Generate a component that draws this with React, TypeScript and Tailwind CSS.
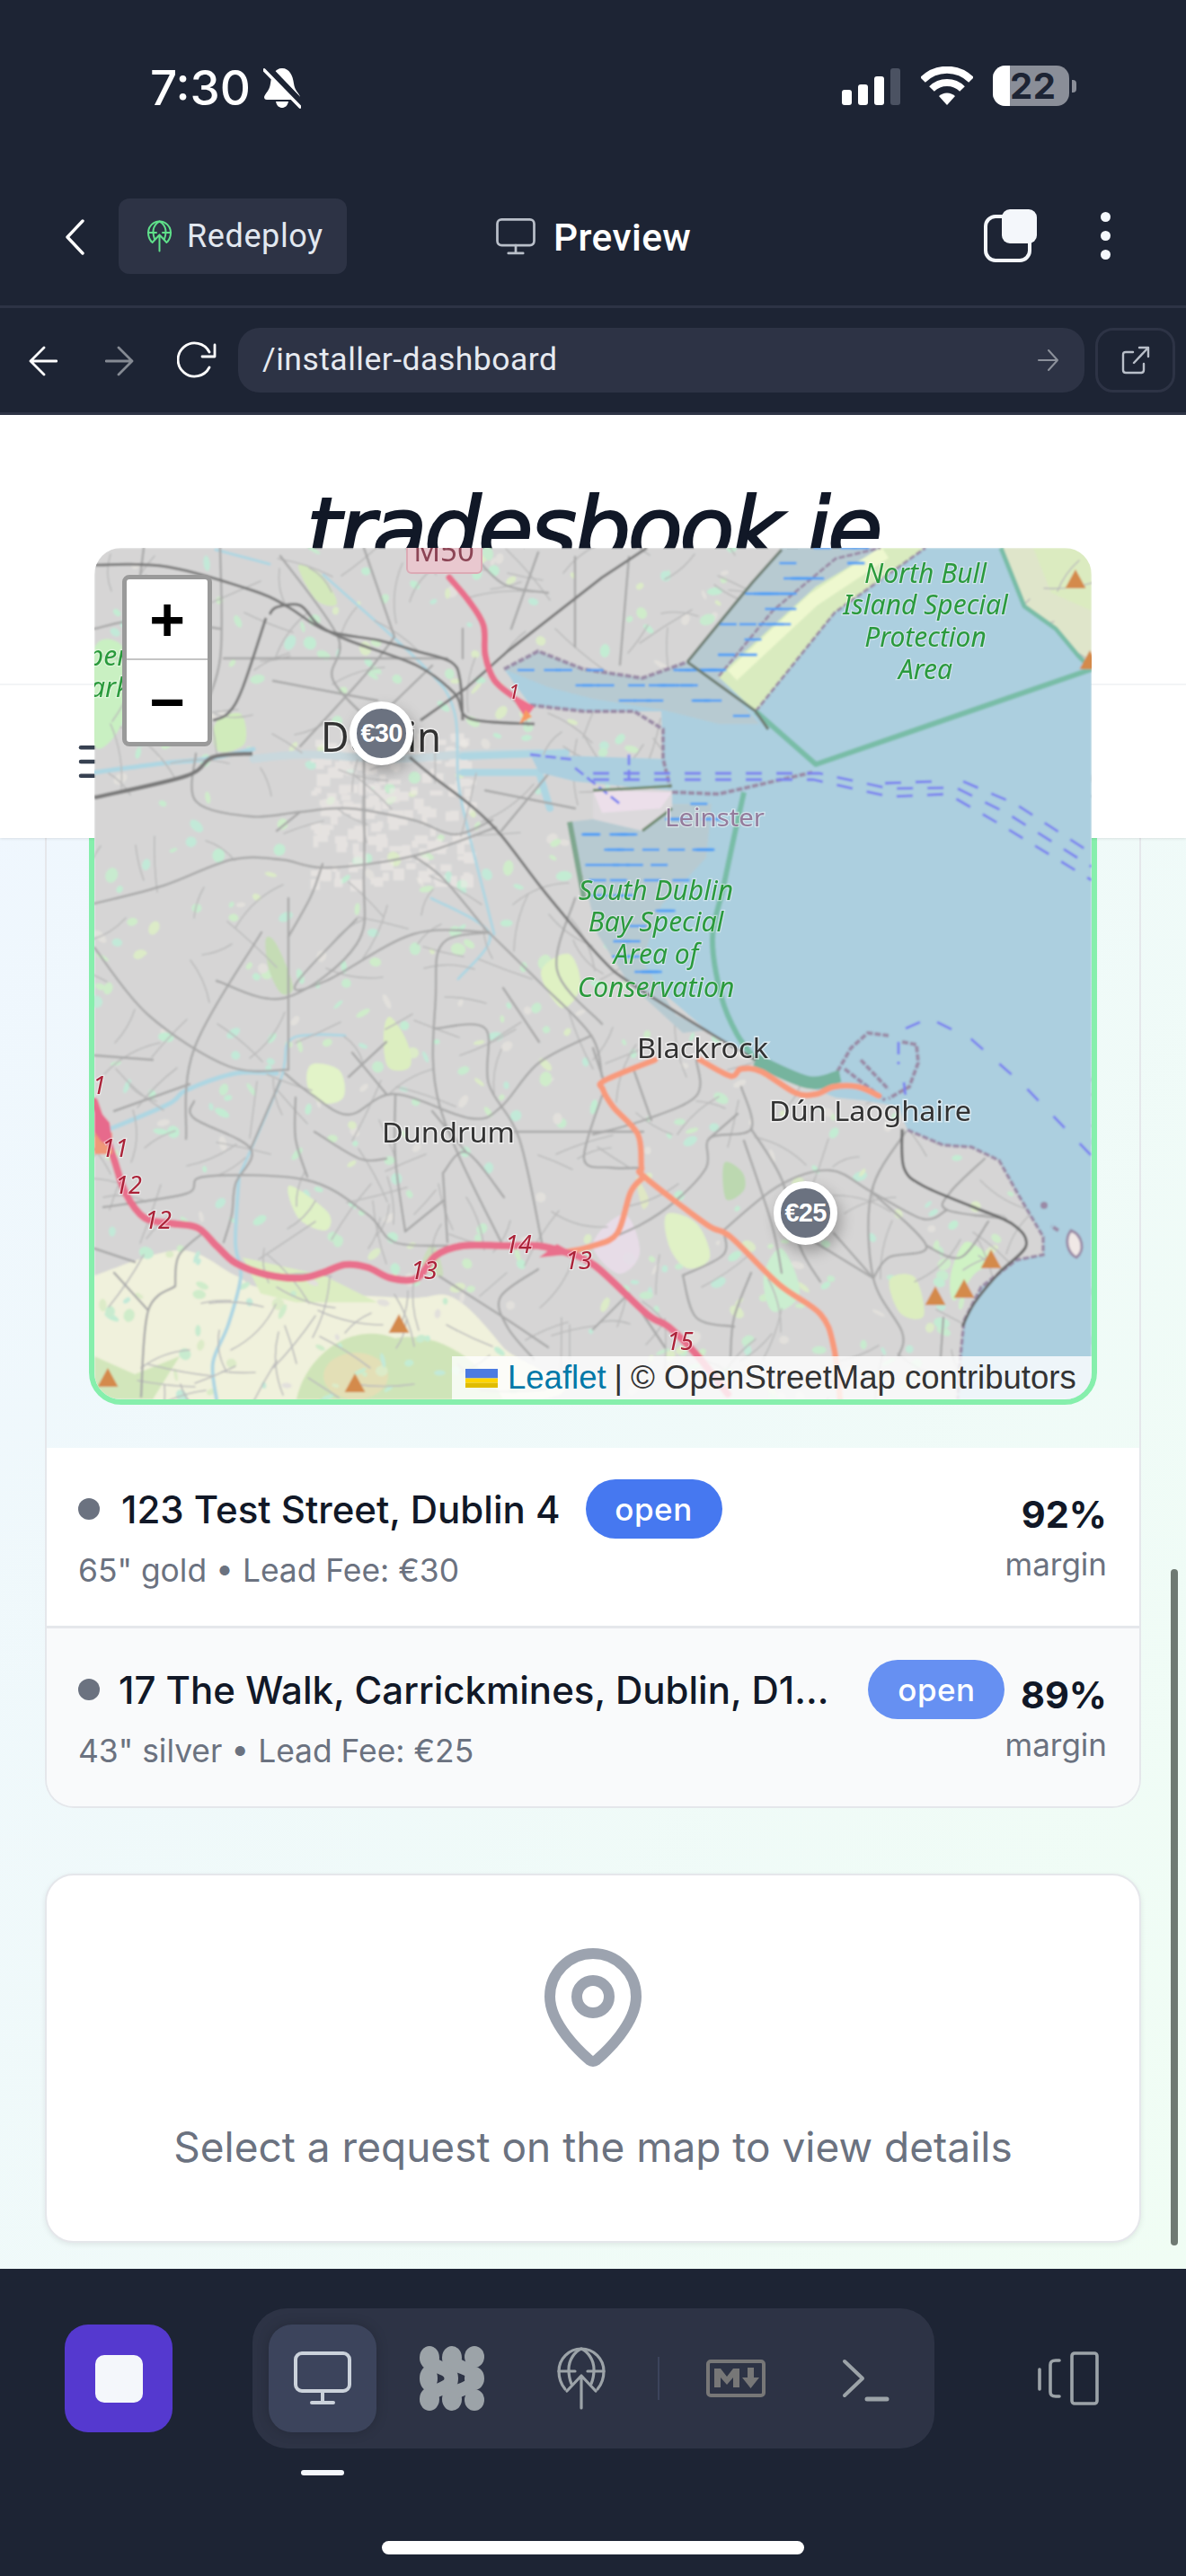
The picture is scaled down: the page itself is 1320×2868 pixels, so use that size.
import React from "react";
import { MapPin, Menu } from "lucide-react";

const inPoly = (x: number, y: number, p: number[][]) => {
  let c = false;
  for (let i = 0, j = p.length - 1; i < p.length; j = i++) {
    if (p[i][1] > y !== p[j][1] > y && x < ((p[j][0] - p[i][0]) * (y - p[i][1])) / (p[j][1] - p[i][1]) + p[i][0]) c = !c;
  }
  return c;
};
let seed = 12345;
const rnd = () => {
  seed = (seed * 16807) % 2147483647;
  return seed / 2147483647;
};

const curve = (pts: number[][], closed = false) => {
  const n = pts.length;
  const at = (i: number) => (closed ? pts[(i + n) % n] : pts[Math.max(0, Math.min(n - 1, i))]);
  let out = `M${pts[0][0]} ${pts[0][1]}`;
  const end = closed ? n : n - 1;
  for (let i = 0; i < end; i++) {
    const p0 = at(i - 1);
    const p1 = at(i);
    const p2 = at(i + 1);
    const p3 = at(i + 2);
    const k = 0.17;
    out += ` C${(p1[0] + (p2[0] - p0[0]) * k).toFixed(1)} ${(p1[1] + (p2[1] - p0[1]) * k).toFixed(1)} ${(p2[0] - (p3[0] - p1[0]) * k).toFixed(1)} ${(p2[1] - (p3[1] - p1[1]) * k).toFixed(1)} ${p2[0]} ${p2[1]}`;
  }
  return closed ? out + " Z" : out;
};
const S = (d: string) =>
  d
    .split("M")
    .filter((s) => s.trim())
    .map((s) =>
      curve(
        s
          .split("L")
          .map((p) => p.trim().split(/\s+/).map(Number))
      )
    )
    .join(" ");

const southFlat = [[634, 915], [660, 912], [715, 925], [745, 895], [792, 895], [786, 955], [736, 1008], [715, 1069], [752, 1130], [786, 1147], [760, 1150], [700, 1095], [665, 1040]];
const northFlat = [[765, 737], [870, 610], [980, 610], [908, 653], [799, 753], [845, 806], [800, 806], [736, 790], [660, 778], [610, 765], [561, 745], [599, 725], [649, 745], [715, 755]];

const genDashes = (poly: number[][], n: number) => {
  const out: number[][] = [];
  const xs = poly.map((p) => p[0]);
  const ys = poly.map((p) => p[1]);
  const [x0, x1, y0, y1] = [Math.min(...xs), Math.max(...xs), Math.min(...ys), Math.max(...ys)];
  let guard = 0;
  while (out.length < n && guard++ < 4000) {
    const x = x0 + rnd() * (x1 - x0);
    const y = y0 + Math.round((rnd() * (y1 - y0)) / 17) * 17;
    if (inPoly(x, y, poly)) out.push([x, y]);
  }
  return out;
};
const flatDashes = [...genDashes(southFlat, 46), ...genDashes(northFlat, 58)];

const specks: { x: number; y: number; rx: number; ry: number; c: string; r: number }[] = [];
for (let i = 0; i < 720; i++) {
  const cs = ["#c8ebcf", "#c3ecd3", "#cfecca", "#c2e9d8", "#e2e0dc", "#dcebc8"];
  specks.push({
    x: 105 + rnd() * 1110,
    y: 610 + rnd() * 948,
    rx: 2 + rnd() * 7,
    ry: 2 + rnd() * 5,
    c: cs[Math.floor(rnd() * cs.length)],
    r: rnd() * 180,
  });
}
const cityBlocks: number[][] = [];
for (let i = 0; i < 190; i++) cityBlocks.push([345 + rnd() * 175, 810 + rnd() * 170, 5 + rnd() * 10, 5 + rnd() * 9]);

const minor: string[] = [];
for (let i = 0; i < 380; i++) {
  const x = 105 + rnd() * 1110;
  const y = 610 + rnd() * 948;
  const a = rnd() * Math.PI * 2;
  const l = 16 + rnd() * 22;
  const b = a + (rnd() - 0.5) * 1.4;
  const x1 = x + Math.cos(a) * l;
  const y1 = y + Math.sin(a) * l;
  const x2 = x1 + Math.cos(b) * l;
  const y2 = y1 + Math.sin(b) * l;
  minor.push(`M${x.toFixed(0)} ${y.toFixed(0)} Q${x1.toFixed(0)} ${y1.toFixed(0)} ${x2.toFixed(0)} ${y2.toFixed(0)}`);
}

const roads = [
  "M105 1006 L182 986 L258 957 L313 957 L363 966 L460 953 L552 921",
  "M105 1055 L165 1130 L254 1187 L321 1191",
  "M241 1092 L317 1111 L397 1051 L405 974 L405 839",
  "M321 1000 L321 1191",
  "M291 1038 L216 1168 L207 1268",
  "M397 1023 L329 1096 L363 1092 L460 1040 L544 1038",
  "M544 1038 L493 1050 L485 1107 L489 1230 L561 1390",
  "M544 1038 L603 1096 L658 1153 L670 1199",
  "M317 1195 L346 1218 L388 1241 L439 1218 L523 1245 L557 1233 L599 1184 L658 1153",
  "M211 1207 L127 1237",
  "M216 1226 L216 1245 L279 1279 L262 1318 L258 1352 L249 1383",
  "M279 1279 L312 1203",
  "M115 1344 L207 1329 L228 1310 L342 1314 L409 1352 L439 1383 L498 1387",
  "M329 1222 L329 1268 L342 1310",
  "M392 1172 L430 1218 M388 1199 L430 1160",
  "M485 1145 L540 1145 L544 1207 L578 1268 L603 1383",
  "M573 1260 L716 1260",
  "M493 1306 L519 1283 L561 1333 M519 1283 L481 1237 M493 1306 L498 1383",
  "M451 1371 L493 1337",
  "M599 1413 L557 1444 L565 1478 L594 1513",
  "M489 1421 L561 1467 L610 1500",
  "M195 1432 L199 1398 L228 1371 M195 1432 L165 1459 L157 1555 M127 1417 L165 1459",
  "M660 1167 L671 1200 M706 1193 L725 1247 M775 1180 L775 1220 L717 1247 L660 1263",
  "M825 1210 L836 1257 L790 1267 L786 1300 L752 1337 L714 1363 L660 1387",
  "M836 1257 L870 1313 L890 1387 L913 1427",
  "M790 1267 L821 1240 M828 1270 L859 1363 L870 1417",
  "M805 1370 L867 1320 L924 1303 L970 1327 L1027 1357 L1054 1347",
  "M1008 1260 L970 1327 L972 1423 L1004 1483 L1000 1510",
  "M897 1377 L972 1423 M970 1327 L1031 1387 L989 1400 L972 1423",
  "M928 1373 L972 1423 M760 1420 L805 1397 L805 1370 M836 1417 L817 1467 L813 1510",
  "M760 1420 L775 1467 L817 1477",
  "M1096 1290 L1058 1327 L1054 1347 L1120 1357 M1100 1360 L1069 1400 L1031 1387 M1050 1467 L1047 1510",
  "M218 839 L218 892 L279 909 L334 904 L388 900 L460 913 L506 929 L548 913",
  "M308 925 L334 904",
  "M359 962 L346 998 L321 1043 M460 953 L493 978 L544 1039",
  "M245 610 L245 733 L220 806",
  "M312 619 L376 709 L371 758 L425 815",
  "M439 709 L405 753 L334 831",
  "M481 741 L422 798 M249 733 L363 733 L498 733",
  "M304 758 L420 780 M599 615 L569 700 M405 610 L439 709 M515 700 L515 733",
  "M105 700 L160 690 L245 700 M160 610 L150 690",
  "M520 610 L560 650 L610 660 M640 620 L640 720 M700 620 L690 740",
  "M540 880 L640 900 M558 925 L620 850",
  "M350 1260 L400 1290 L430 1290 M440 1220 L440 1290 L451 1371",
  "M105 1175 L170 1180 M105 1390 L150 1405 M105 1280 L120 1270",
  "M670 1220 L650 1290 L680 1300 L714 1300",
  "M700 1440 L740 1500 M660 1480 L700 1440",
  "M640 1000 L620 1080 L670 1140 M560 1100 L600 1160",
];

const parks: [number[][], string][] = [
  [[[105, 722], [140, 725], [138, 800], [105, 830]], "#c9f0c2"],
  [[[240, 805], [268, 795], [272, 828], [242, 836]], "#d0ebbb"],
  [[[332, 630], [358, 640], [375, 672], [352, 668]], "#d3e8bb"],
  [[[347, 1185], [378, 1192], [382, 1222], [357, 1228], [342, 1208]], "#e2f3c8"],
  [[[322, 1320], [365, 1350], [362, 1370], [332, 1356]], "#dff1c6"],
  [[[434, 1132], [453, 1160], [456, 1188], [432, 1188], [427, 1152]], "#dceec0"],
  [[[602, 1082], [633, 1062], [646, 1098], [625, 1122]], "#dff1c3"],
  [[[296, 1045], [308, 1052], [326, 1098], [313, 1106], [299, 1078]], "#c5dcb5"],
  [[[742, 1352], [775, 1362], [790, 1400], [765, 1412], [745, 1388]], "#e0f1c6"],
  [[[708, 1310], [722, 1335], [715, 1345]], "#dfe7c4"],
  [[[806, 1295], [826, 1305], [828, 1325], [808, 1335]], "#bcd8b0"],
  [[[990, 1425], [1018, 1422], [1028, 1465], [1002, 1462]], "#dcedbf"],
  [[[1072, 1385], [1088, 1388], [1106, 1405], [1085, 1418], [1062, 1448], [1058, 1420]], "#cff2c4"],
  [[[850, 1420], [870, 1390], [890, 1440], [860, 1460]], "#cbeed0"],
  [[[470, 1410], [493, 1420], [482, 1385]], "#cbdcbc"],
];

const Map2D = () => (
  <svg viewBox="105 610 1110 948" className="block w-full h-full">
    <defs>
      <filter id="mapblur" x="-2%" y="-2%" width="104%" height="104%">
        <feGaussianBlur stdDeviation="1" />
      </filter>
      <filter id="labelblur">
        <feGaussianBlur stdDeviation="0.4" />
      </filter>
    </defs>
    <g filter="url(#mapblur)">
      <rect x="105" y="610" width="1110" height="948" fill="#d6d5d5" />
      <path d={curve([[105, 1420], [200, 1392], [262, 1420], [300, 1435], [450, 1445], [505, 1445], [560, 1500], [600, 1558], [105, 1558]], false) + " Z"} fill="#f0f1dc" />
      <path d="M330 1558 C340 1510 390 1470 440 1490 C490 1480 540 1520 560 1558 Z" fill="#cfe4b8" />
      <path d="M105 1510 L150 1530 L200 1510 L170 1558 L105 1558 Z" fill="#d2e6bb" />
      <path d="M270 1400 L360 1420 L420 1450 L330 1450 L290 1440 Z" fill="#dcedc2" />
      <ellipse cx="396" cy="1532" rx="36" ry="26" fill="#e3dfb6" />
      {specks.map((s, i) => (
        <ellipse key={i} cx={s.x} cy={s.y} rx={s.rx} ry={s.ry} fill={s.c} transform={`rotate(${s.r} ${s.x} ${s.y})`} />
      ))}
      <g opacity=".6">
        {cityBlocks.map((b, i) => (
          <rect key={i} x={b[0]} y={b[1]} width={b[2]} height={b[3]} fill="#f0ece8" />
        ))}
      </g>
      {parks.map(([p, c], i) => (
        <path key={i} d={curve(p, true)} fill={c} />
      ))}
      <path d="M1114 610 L1130 650 L1140 675 L1175 700 L1200 730 L1215 745 L1215 610 Z" fill="#dfe5ca" />
      <path d="M1150 610 L1215 610 L1215 680 L1170 660 Z" fill="#dbebc0" />
      <path d={curve([[660, 1385], [695, 1352], [712, 1395], [688, 1418]], true)} fill="#e9dde9" opacity=".9" />
      {/* rivers */}
      <g fill="none" stroke="#aed6e2" strokeLinecap="round" strokeLinejoin="round">
        <path d={S("M105 860 L180 850 L230 845 L282 834")} strokeWidth="5" />
        <path d={S("M282 845 L340 840 L440 845 L515 840 L600 838")} strokeWidth="9" stroke="#c9d8dd" />
        <path d="M515 842 L630 838 M515 860 L600 860 L612 900" strokeWidth="8" />
        <path d={S("M105 1264 L186 1230 L207 1214 L262 1195 L308 1195")} strokeWidth="5" />
        <path d={S("M266 1310 L312 1203 L321 1160 L350 1152 L384 1153")} strokeWidth="3" />
        <path d={S("M266 1310 L262 1383 L268 1421 L254 1475 L237 1517 L241 1558")} strokeWidth="4" />
        <path d={S("M480 1000 L545 1040 L510 1090 M540 1000 L550 1040")} strokeWidth="3" />
        <path d={S("M240 612 L300 628 M360 640 L470 740 L505 790 L510 870 L520 920 L540 1000")} strokeWidth="3" />
      </g>
      {/* streets */}
      <g fill="none" stroke="#bcbcbc" strokeWidth="1.6" strokeLinecap="round">
        {minor.map((d, i) => (
          <path key={i} d={d} />
        ))}
      </g>
      <g fill="none" stroke="#a9a9a9" strokeWidth="2.4" strokeLinejoin="round" strokeLinecap="round">
        {roads.map((d, i) => (
          <path key={i} d={S(d)} />
        ))}
      </g>
      {/* sea */}
      <path
        d="M870 610 L1114 610 L1130 650 L1140 675 L1175 700 L1200 730 L1215 745 L1215 1558 L1065 1558 L1069 1510 L1073 1470 L1092 1433 L1131 1403 L1161 1397 L1161 1377 L1135 1333 L1112 1292 L1081 1277 L1050 1275 L1010 1258 L1000 1232 L960 1225 L930 1222 L900 1210 L841 1180 L790 1150 L720 1090 L670 1010 L634 930 L660 912 L715 925 L748 900 L748 880 L700 876 L640 870 L600 860 L590 840 L738 845 L736 792 L650 792 L590 785 L561 745 L599 725 L649 745 L715 755 L765 737 Z"
        fill="#accfdf"
      />
      {/* mud flats and bull island */}
      <path d={`M${northFlat.map((p) => p.join(" ")).join(" L")} Z`} fill="#b7cad1" />
      <path d={`M${southFlat.map((p) => p.join(" ")).join(" L")} Z`} fill="#b7cad1" />
      <path d="M799 753 L841 792 L929 682 L1030 610 L980 610 L908 653 Z" fill="#d9ebbf" />
      <path d="M815 752 L905 668 L985 615" fill="none" stroke="#eef8cf" strokeWidth="15" />
      <path d="M660 880 L748 882 L748 900 L715 925 L660 912 Z" fill="#dcd9dc" />
      <path d="M660 880 L748 882 L735 900 L670 905 Z" fill="#ecdfea" />
      {/* coast outline */}
      <g fill="none" stroke="#9a8aa6" strokeWidth="4" strokeDasharray="7 2">
        <path d="M561 745 L599 725 L649 745 L715 755 L765 737" />
        <path d="M590 785 L650 792 L706 792 L738 812 L738 845 L746 877" />
        <path d="M748 882 L800 884 L904 860" />
        <path d="M800 753 L860 680 L930 622 L980 610" strokeWidth="3" />
        <path d="M841 792 L929 682 L1030 610" strokeWidth="3" />
        <path d="M932 1193 L947 1167 L966 1150 L989 1153" />
        <path d="M1004 1160 L1020 1163 L1022 1183 L1012 1210 L989 1223" />
        <path d="M958 1180 L989 1213 M940 1190 L985 1225" />
        <path d="M1010 1258 L1050 1275 L1081 1277 L1112 1292 L1135 1333 L1161 1377 L1161 1397 L1131 1403 L1092 1433 L1073 1470 L1069 1510 L1066 1558" strokeWidth="3.5" />
        <path d="M1178 1370 L1170 1365" />
      </g>
      <path d="M1192 1370 C1205 1375 1208 1392 1198 1400 C1188 1395 1184 1380 1192 1370 Z" fill="#f0e8e6" stroke="#9a8aa6" strokeWidth="3" />
      <circle cx="1162" cy="1342" r="4" fill="#9a8aa6" />
      <g stroke="#4c9ff6" strokeWidth="2.6">
        {flatDashes.map((d, i) => (
          <line key={i} x1={d[0]} y1={d[1]} x2={d[0] + 19} y2={d[1]} />
        ))}
      </g>
      {/* shipping lanes */}
      <g fill="none" stroke="#7a80ef" strokeWidth="2.8" strokeDasharray="18 16">
        <path d="M660 861 L780 861 L912 861 L990 878 L1064 877 L1120 905 L1215 965" />
        <path d="M660 868 L780 868 L905 868 L990 887 L1055 884 L1110 916 L1215 980" />
        <path d="M1072 870 L1130 895 L1215 950" />
        <path d="M985 872 L1040 870" />
        <path d="M1008 1145 L1024 1138 M1043 1138 L1081 1157 L1138 1207 L1215 1287" strokeDasharray="18 24" />
        <path d="M1000 1160 L1000 1185 M1006 1205 L1008 1222" strokeDasharray="14 8" />
        <path d="M640 855 L690 895 M700 840 L700 870 M590 840 L640 846" strokeDasharray="12 5" />
      </g>
      {/* protected area lines */}
      <g fill="none" stroke="#79bda7" strokeLinejoin="round">
        <path d="M841 792 L908 851 L1215 745" strokeWidth="6" />
        <path d={S("M828 882 L818 927 L805 988 L793 1045 L803 1110 L820 1151 L841 1180")} strokeWidth="6" />
        <path d={S("M841 1180 L900 1205 L935 1198")} strokeWidth="14" stroke="#76b49e" />
        <path d="M1114 610 L1130 650 L1140 675 L1175 700 L1200 730 L1215 745" strokeWidth="5" />
      </g>
      <g fill="none" stroke="#6f7f74" strokeWidth="3.2">
        <path d="M765 737 L837 649 L870 612 M765 737 L841 792 L855 812" />
        <path d="M634 915 L650 1000" stroke="#7fa78f" strokeWidth="6" />
        <path d="M660 880 L700 878 L748 875 M748 900 L715 925" stroke="#6f8a6f" />
      </g>
      {/* rail */}
      <g fill="none" stroke="#7a7a7a" strokeWidth="3" strokeLinejoin="round">
        <path d={S("M105 629 L186 631 L283 658 L321 676 L363 702 L422 713 L464 725 L502 737 L512 757 L515 802")} />
        <path d={S("M300 684 L308 676 L334 674 L355 696 L388 713 L464 741 L506 772 L523 800 L595 806")} />
        <path d={S("M296 688 L270 766 L254 794 L237 802")} />
        <path d="M720 610 L670 643 L565 725 L519 766 L468 802" />
        <path d={S("M105 888 L207 864 L237 843 L281 839")} strokeWidth="4.5" />
        <path d={S("M456 843 L481 864 L523 896 L557 929 L607 994 L670 1068 L704 1096 L790 1150 L841 1180")} />
        <path d={S("M1004 1257 L1006 1300 L1027 1320 L1081 1343 L1127 1363 L1142 1387 L1112 1417 L1085 1450 L1071 1477")} stroke="#6a6a6a" />
      </g>
      {/* orange trunk roads */}
      <g fill="none" stroke="#f89a7c" strokeWidth="6.5" strokeLinejoin="round" strokeLinecap="round">
        <path d={S("M729 1180 L673 1203 L671 1213 L683 1233 L710 1263 L714 1300 L717 1310 L786 1363 L813 1377 L867 1430 L913 1463 L928 1500 L935 1558")} />
        <path d={S("M717 1310 L702 1327 L687 1373 L660 1387 L630 1394")} />
        <path d={S("M779 1180 L813 1198 L825 1190 L847 1193 L886 1217 L909 1218 L928 1210 L955 1210 L978 1220")} />
      </g>
      {/* motorway */}
      <g fill="none" stroke="#e96f8c" strokeLinejoin="round" strokeLinecap="round">
        <path d={S("M500 643 L521 668 L538 696 L540 729 L550 757 L569 774")} strokeWidth="7" />
        <path d={S("M105 1226 L115 1256 L127 1291 L140 1329 L161 1356 L190 1362 L220 1367 L241 1387 L262 1406 L296 1419 L334 1423 L359 1417 L384 1408 L409 1411 L435 1423 L464 1423 L485 1398 L515 1387 L561 1387 L599 1387 L628 1394 L662 1409 L720 1463 L744 1477 L775 1508 L810 1552")} strokeWidth="8" />
      </g>
      <path d="M566 770 L595 787 L585 800 Z" fill="#ef6f8c" />
      <path d="M585 790 L592 798 L578 806 Z" fill="#f79a62" />
      <path d="M620 1385 L640 1396 L600 1400 Z" fill="#e96f8c" />
      <path d="M105 1240 L125 1262 L125 1285 L105 1285 Z" fill="#f09878" />
      <path d="M105 1230 L122 1250 L126 1280 L112 1270 L105 1260 Z" fill="#e76a8c" />
      {[[120, 1534], [444, 1474], [395, 1540], [1103, 1402], [1073, 1435], [1041, 1443], [1197, 645], [1213, 735]].map(([x, y], i) => (
        <path key={i} d={`M${x} ${y - 11} L${x + 11.5} ${y + 10} L${x - 11.5} ${y + 10} Z`} fill="#d48a4c" />
      ))}
    </g>
    <rect x="453" y="596" width="83" height="42" rx="5" fill="#e9c8cf" stroke="#dcaab5" strokeWidth="2" />
    <g filter="url(#labelblur)" fontFamily="'Noto Sans', sans-serif">
      <text x="494" y="625" textAnchor="middle" fontSize="33" fill="#8c4455">M50</text>
      <g fill="#333333" stroke="#ffffff" strokeOpacity=".55" strokeWidth="3" style={{ paintOrder: "stroke" }}>
        <text x="357" y="837" fontSize="46" textLength="134" lengthAdjust="spacingAndGlyphs">Dublin</text>
        <text x="709" y="1178" fontSize="31" textLength="146" lengthAdjust="spacingAndGlyphs">Blackrock</text>
        <text x="856" y="1248" fontSize="31" textLength="225" lengthAdjust="spacingAndGlyphs">Dún Laoghaire</text>
        <text x="425" y="1272" fontSize="31" textLength="148" lengthAdjust="spacingAndGlyphs">Dundrum</text>
      </g>
      <text x="740" y="920" fontSize="27" textLength="111" lengthAdjust="spacingAndGlyphs" fill="#957b9c" stroke="#ffffff" strokeOpacity=".45" strokeWidth="2.5" style={{ paintOrder: "stroke" }}>Leinster</text>
      <g fill="#2c9a3c" fontStyle="italic" fontSize="30" textAnchor="middle" stroke="#ffffff" strokeOpacity=".4" strokeWidth="2.5" style={{ paintOrder: "stroke" }}>
        <text x="1030" y="649">North Bull</text>
        <text x="1030" y="684">Island Special</text>
        <text x="1030" y="720">Protection</text>
        <text x="1030" y="756">Area</text>
        <text x="730" y="1002">South Dublin</text>
        <text x="730" y="1037">Bay Special</text>
        <text x="730" y="1073">Area of</text>
        <text x="730" y="1110">Conservation</text>
        <text x="120" y="741">per</text>
        <text x="122" y="776">ark</text>
      </g>
      <g fill="#ab2238" fontStyle="italic" fontSize="27" stroke="#ffffff" strokeOpacity=".45" strokeWidth="2.5" style={{ paintOrder: "stroke" }}>
        <text x="566" y="778" fontSize="22">1</text>
        <text x="103" y="1218">1</text>
        <text x="113" y="1288">11</text>
        <text x="128" y="1329">12</text>
        <text x="161" y="1368">12</text>
        <text x="457" y="1424">13</text>
        <text x="562" y="1395">14</text>
        <text x="629" y="1413">13</text>
        <text x="742" y="1503">15</text>
      </g>
    </g>
  </svg>
);

const Marker = ({ label }: { label: string }) => (
  <div className="flex h-[71px] w-[71px] items-center justify-center rounded-full border-[8px] border-white bg-[#6b7280] text-[29px] font-semibold tracking-[-0.8px] text-white shadow-[4px_8px_16px_rgba(0,0,0,0.28)] font-['Liberation_Sans',sans-serif]">
    {label}
  </div>
);

const GlobeUp = ({ color, sw = 2 }: { color: string; sw?: number }) => (
  <svg viewBox="0 0 54 70" fill="none" stroke={color} strokeWidth={sw * 2} strokeLinecap="round" strokeLinejoin="round" className="h-full w-full">
    <path d="M9 47 C4 41 2 34 2 27 A25 25 0 1 1 52 27 C52 34 50 41 45 47" />
    <path d="M16 41 C13 34 13 27 13 25 C13 14 20 5 27 2 C34 5 41 14 41 25 C41 27 41 34 38 41" />
    <path d="M2 27 H20 M34 27 H52" />
    <path d="M27 68 V32 M11 49 L27 32 L43 49" />
  </svg>
);

const Monitor = ({ color }: { color: string }) => (
  <svg viewBox="0 0 64 60" fill="none" stroke={color} strokeWidth="4" strokeLinecap="round" strokeLinejoin="round" className="h-full w-full">
    <rect x="2" y="2" width="60" height="42" rx="7" />
    <path d="M32 44 V56 M20 57 H44" />
  </svg>
);

const Weave = () => (
  <svg viewBox="0 0 72 72" className="h-full w-full">
    <g fill="#9ca3a8">
      <ellipse cx="10" cy="36" rx="10" ry="14" />
      <ellipse cx="61" cy="12" rx="11" ry="12" />
      <ellipse cx="61" cy="60" rx="11" ry="12" />
      <ellipse cx="11" cy="13" rx="11" ry="13" />
      <ellipse cx="36" cy="13" rx="11" ry="13" />
      <ellipse cx="11" cy="59" rx="11" ry="13" />
      <ellipse cx="36" cy="59" rx="11" ry="13" />
      <ellipse cx="36" cy="36" rx="7" ry="13" />
      <ellipse cx="61" cy="36" rx="11" ry="13" />
    </g>
    <g fill="none" stroke="#9ca3a8" strokeWidth="15" strokeLinecap="round">
      <path d="M11 14 C13 26 35 22 35 36 C35 50 13 46 11 58" />
      <path d="M36 14 C38 26 60 22 60 36 C60 50 38 46 36 58" />
    </g>
  </svg>
);

const Row = ({
  name,
  sub,
  pct,
  badge,
  textGap,
  rowClass,
}: {
  name: string;
  sub: string;
  pct: string;
  badge: string;
  textGap: string;
  rowClass: string;
}) => (
  <div className={`flex items-start justify-between pl-[35px] pr-[36px] pt-[35px] ${rowClass}`}>
    <div className="min-w-0 flex-1">
      <div className="flex h-[66px] items-center">
        <span className="h-[24px] w-[24px] shrink-0 rounded-full bg-[#6b7280]" />
        <span className={`${textGap} truncate text-[42px] font-medium text-[#111827]`}>{name}</span>
        <span className="ml-[28px] flex h-[66px] w-[152px] shrink-0 items-center justify-center rounded-full text-[35px] font-medium tracking-[0.5px] text-white" style={{ background: badge }}>open</span>
      </div>
      <div className="mt-[16px] text-[35.4px] leading-[40px] text-[#6b7280]">{sub}</div>
    </div>
    <div className="shrink-0 pt-[15px] text-right">
      <div className="text-[41.5px] font-bold leading-[48px] text-[#111827]">{pct}</div>
      <div className="mt-[11px] text-[35px] leading-[40px] text-[#6b7280]">margin</div>
    </div>
  </div>
);

export default function App() {
  return (
    <div className="flex h-[2868px] w-[1320px] flex-col overflow-hidden bg-[#1d2434] font-['Inter',sans-serif]">
      {/* status bar */}
      <div className="flex h-[221px] shrink-0 items-start justify-between pl-[167px] pr-[122px] pt-[69px]">
        <div className="flex items-center">
          <span className="text-[53px] font-medium leading-[58px] text-white">7:30</span>
          <svg viewBox="0 0 42 46" className="ml-[14px] h-[46px] w-[42px]">
            <path d="M21 1 C29 1 33 9 34 18 C35 26 40 29 41 33 C41 35 40 36 38 36 H4 C2 36 1 35 1 33 C2 29 7 26 8 18 C9 9 13 1 21 1 Z M14 38 H28 C27 43 24 45 21 45 C18 45 15 43 14 38 Z" fill="#fff" />
            <path d="M4 0 L42 40" stroke="#1d2434" strokeWidth="8" />
            <path d="M1 3 L41 44" stroke="#fff" strokeWidth="3.6" strokeLinecap="round" />
            <path d="M6 -1 L44 38" stroke="#1d2434" strokeWidth="3" />
          </svg>
        </div>
        <div className="mt-[4px] flex items-center">
          <div className="flex h-[42px] items-end gap-[7px]">
            <div className="h-[17px] w-[11px] rounded-[3px] bg-white" />
            <div className="h-[23px] w-[11px] rounded-[3px] bg-white" />
            <div className="h-[32px] w-[11px] rounded-[3px] bg-white" />
            <div className="h-[41px] w-[11px] rounded-[3px] bg-[#4b5262]" />
          </div>
          <svg viewBox="0 0 58 43" className="ml-[23px] h-[43px] w-[58px]">
            <g fill="none" stroke="#fff" strokeWidth="8">
              <path d="M2 15 A38 38 0 0 1 56 15" />
              <path d="M12 25 A24 24 0 0 1 46 25" />
            </g>
            <path d="M29 43 L20 33 A13 13 0 0 1 38 33 Z" fill="#fff" />
          </svg>
          <div className="relative ml-[22px] flex h-[45px] w-[85px] items-center overflow-hidden rounded-[14px] bg-[#8a8e98]">
            <div className="h-full w-[19px] bg-white" />
            <span className="ml-0 text-[40px] font-bold leading-none tracking-[0.5px] text-[#1d2434]">22</span>
          </div>
          <div className="ml-[3px] h-[14px] w-[5px] rounded-r-[4px] bg-[#8a8e98]" />
        </div>
      </div>

      {/* app header */}
      <div className="flex h-[119px] shrink-0 items-start pl-[71px]">
        <svg viewBox="0 0 24 42" className="mt-[22px] h-[42px] w-[24px]" fill="none" stroke="#fff" strokeWidth="3.4" strokeLinecap="round" strokeLinejoin="round">
          <path d="M21 3 L4 21 L21 39" />
        </svg>
        <div className="ml-[37px] flex h-[84px] w-[254px] items-center rounded-[12px] bg-[#2d3345] pl-[32px]">
          <div className="h-[36px] w-[27px]">
            <GlobeUp color="#5fe08a" />
          </div>
          <span className="ml-[17px] font-['Roboto',sans-serif] text-[36px] leading-none tracking-[0.6px] text-[#e2e8f0]">Redeploy</span>
        </div>
        <div className="ml-[166px] mt-[22px] h-[41px] w-[44px]">
          <Monitor color="#b9bfc9" />
        </div>
        <span className="ml-[20px] mt-[20px] font-['Roboto',sans-serif] text-[42.5px] font-medium leading-[48px] tracking-[0.4px] text-white">Preview</span>
        <div className="flex-1" />
        <div className="relative mr-[71px] mt-[12px] h-[59px] w-[59px]">
          <div className="absolute bottom-0 left-0 h-[53px] w-[53px] rounded-[13px] border-[4px] border-[#f4f7fb]" />
          <div className="absolute right-0 top-0 h-[38px] w-[39px] rounded-[9px] bg-[#f4f7fb]" />
        </div>
        <div className="mr-[84px] mt-[15px] flex flex-col gap-[10px]">
          <div className="h-[11px] w-[11px] rounded-full bg-[#f4f7fb]" />
          <div className="h-[11px] w-[11px] rounded-full bg-[#f4f7fb]" />
          <div className="h-[11px] w-[11px] rounded-full bg-[#f4f7fb]" />
        </div>
      </div>
      <div className="h-[3px] shrink-0 bg-[#2d3345]" />

      {/* browser bar */}
      <div className="flex h-[116px] shrink-0 items-start pl-[32px] pt-[22px]">
        <svg viewBox="0 0 32 34" className="mt-[20px] h-[34px] w-[32px]" fill="none" stroke="#fff" strokeWidth="2.8" strokeLinecap="round" strokeLinejoin="round">
          <path d="M31 17 H2 M17 2 L2 17 L17 32" />
        </svg>
        <svg viewBox="0 0 32 34" className="ml-[53px] mt-[20px] h-[34px] w-[32px]" fill="none" stroke="#858a93" strokeWidth="2.8" strokeLinecap="round" strokeLinejoin="round">
          <path d="M1 17 H30 M15 2 L30 17 L15 32" />
        </svg>
        <svg viewBox="0 0 44 42" className="ml-[48px] mt-[15px] h-[42px] w-[44px]" fill="none" stroke="#fff" strokeWidth="2.8" strokeLinecap="round" strokeLinejoin="round">
          <path d="M36 12 A18.5 18.5 0 1 0 36 29" />
          <path d="M42 4 V17 H28" />
        </svg>
        <div className="ml-[24px] flex h-[72px] w-[942px] items-center rounded-[24px] bg-[#2d3345] pl-[27px] pr-[28px]">
          <span className="font-['Roboto',sans-serif] text-[35.5px] leading-none tracking-[0.5px] text-[#e6eaf0]">/installer-dashboard</span>
          <div className="flex-1" />
          <svg viewBox="0 0 24 26" className="h-[26px] w-[24px]" fill="none" stroke="#8c919b" strokeWidth="2" strokeLinecap="round" strokeLinejoin="round">
            <path d="M1 13 H22 M12 2 L22 13 L12 24" />
          </svg>
        </div>
        <div className="ml-[12px] flex h-[72px] w-[89px] items-center justify-center rounded-[20px] border-[3px] border-[#2d3345]">
          <svg viewBox="0 0 32 32" className="h-[32px] w-[32px]" fill="none" stroke="#b9bfc9" strokeWidth="2.4" strokeLinecap="round" strokeLinejoin="round">
            <path d="M13 7 H5 C3 7 2 8 2 10 V27 C2 29 3 30 5 30 H22 C24 30 25 29 25 27 V20" />
            <path d="M14 19 L30 2 M20 2 H30 V12" />
          </svg>
        </div>
      </div>
      <div className="h-[3px] shrink-0 bg-[#2d3345]" />

      {/* page */}
      <div className="relative h-[2064px] shrink-0 overflow-hidden bg-gradient-to-br from-[#eff6ff] to-[#f0fdf4]">
        <header className="relative z-10 h-[471px] bg-white shadow-[0_1px_3px_rgba(0,0,0,0.1)]">
          <div className="h-[301px] border-b-2 border-[#f3f4f6] pt-[69px] text-center">
            <span className="font-['DejaVu_Sans',sans-serif] text-[100px] font-normal italic leading-[120px] tracking-[-3.5px] text-[#111827] [-webkit-text-stroke:2px_#111827]">tradesbook.ie</span>
          </div>
          <div className="flex h-[170px] items-center pl-[81px]">
            <Menu size={54} strokeWidth={2} color="#374151" />
          </div>
        </header>

        <main className="px-[50px]">
          <div className="rounded-[32px] border-x-2 border-b-2 border-[#e5e7eb]">
            <div className="px-[47px] pb-[48px]">
              <div className="-mt-[329px] rounded-[36px] border-[6px] border-[#86efac]">
                <div className="relative z-20 h-[948px] overflow-hidden rounded-[30px]">
                  <Map2D />
                  <div className="absolute left-[31px] top-[30px] flex h-[191px] w-[100px] flex-col rounded-[8px] border-[5px] border-[#9a9a9a] bg-white font-['Liberation_Sans',sans-serif] text-black">
                    <div className="flex h-[90px] items-center justify-center border-b-2 border-[#c4c4c4] text-[68px] font-bold leading-none">+</div>
                    <div className="flex flex-1 items-center justify-center text-[68px] font-bold leading-none">−</div>
                  </div>
                  <div className="absolute left-[284px] top-[171px]">
                    <Marker label="€30" />
                  </div>
                  <div className="absolute left-[756px] top-[705px]">
                    <Marker label="€25" />
                  </div>
                  <div className="absolute bottom-0 right-0 flex h-[48px] w-[712px] items-center bg-white/80 pl-[15px] font-['Liberation_Sans',sans-serif] text-[36.5px] leading-none text-[#333333]">
                    <svg viewBox="0 0 36 21" className="h-[21px] w-[36px] shrink-0">
                      <rect width="36" height="10.5" fill="#4c7be1" />
                      <rect y="10.5" width="36" height="5" fill="#ffd500" />
                      <rect y="15.5" width="36" height="5.5" fill="#e0bc00" />
                    </svg>
                    <span className="ml-[11px] text-[#0078a8]">Leaflet</span>
                    <span className="ml-[9px] mr-[9px]">|</span>
                    <span className="whitespace-nowrap">© OpenStreetMap contributors</span>
                  </div>
                </div>
              </div>
            </div>
            <Row
              name="123 Test Street, Dublin 4"
              sub={'65" gold • Lead Fee: €30'}
              pct="92%"
              badge="#4678f0"
              textGap="ml-[24px]"
              rowClass="h-[201px] bg-white border-b-[3px] border-[#e5e7eb]"
            />
            <Row
              name="17 The Walk, Carrickmines, Dublin, D15 XY12"
              sub={'43" silver • Lead Fee: €25'}
              pct="89%"
              badge="#6690f2"
              textGap="ml-[21px]"
              rowClass="h-[198px] rounded-b-[30px] bg-[#f9fafb]"
            />
          </div>

          <div className="mt-[73px] flex h-[411px] flex-col items-center rounded-[32px] border-2 border-[#e5e7eb] bg-white pt-[75px] shadow-[0_2px_6px_rgba(0,0,0,0.08)]">
            <MapPin size={144} strokeWidth={2} color="#9ca3af" />
            <p className="mt-[53px] text-[46px] leading-[60px] text-[#6b7280]">Select a request on the map to view details</p>
          </div>
        </main>

        <div className="absolute left-[1303px] top-[1285px] z-30 h-[753px] w-[8px] rounded-full bg-[#6f7a73]" />
      </div>

      {/* bottom bar */}
      <div className="relative flex h-[342px] shrink-0 flex-col">
        <div className="mt-[22px] flex h-[200px] items-center pl-[72px]">
          <div className="flex h-[120px] w-[120px] items-center justify-center rounded-[26px] bg-[#5539cf]">
            <div className="h-[53px] w-[53px] rounded-[10px] bg-[#f4f7fb]" />
          </div>
          <div className="ml-[89px] flex h-[156px] w-[759px] items-center rounded-[38px] bg-[#2d3345] pl-[18px]">
            <div className="flex h-[120px] w-[120px] items-center justify-center rounded-[26px] bg-[#3c445c] shadow-[0_0_14px_rgba(0,0,0,0.18)]">
              <div className="h-[60px] w-[64px]">
                <Monitor color="#cbd2db" />
              </div>
            </div>
            <div className="ml-[48px] h-[72px] w-[72px]">
              <Weave />
            </div>
            <div className="ml-[81px] h-[70px] w-[54px]">
              <GlobeUp color="#9ca3a8" sw={1.6} />
            </div>
            <div className="ml-[58px] h-[48px] w-[2px] bg-[#3c445c]" />
            <svg viewBox="0 0 66 42" className="ml-[52px] h-[42px] w-[66px]" fill="none">
              <rect x="2" y="2" width="62" height="38" rx="3" stroke="#777777" strokeWidth="4" />
              <path d="M9 31 V10 H16 L23 19 L30 10 H37 V31 H30 V20 L23 28 L16 20 V31 Z" fill="#777777" />
              <path d="M46 9 H53 V20 H59 L49.5 32 L40 20 H46 Z" fill="#777777" />
            </svg>
            <svg viewBox="0 0 54 48" className="ml-[85px] mt-[3px] h-[48px] w-[54px]" fill="none" stroke="#9ca3a8" strokeLinecap="round" strokeLinejoin="round">
              <path d="M3 3 L23 22 L3 41" strokeWidth="4" />
              <path d="M28 45 H50" strokeWidth="5" />
            </svg>
          </div>
          <svg viewBox="0 0 68 60" className="ml-[115px] h-[60px] w-[68px]" fill="none" stroke="#9ca3a8" strokeLinecap="round" strokeLinejoin="round" strokeWidth="3.6">
            <path d="M2 20 V42" />
            <path d="M24 10 H20 C15 10 14 12 14 15 V45 C14 48 15 50 20 50 H24" />
            <rect x="38" y="2" width="28" height="56" rx="3" />
          </svg>
        </div>
        <div className="ml-[335px] mt-[2px] h-[6px] w-[48px] rounded-full bg-[#f4f7fb]" />
        <div className="ml-[425px] mt-[73px] h-[15px] w-[470px] rounded-full bg-white" />
      </div>
    </div>
  );
}
